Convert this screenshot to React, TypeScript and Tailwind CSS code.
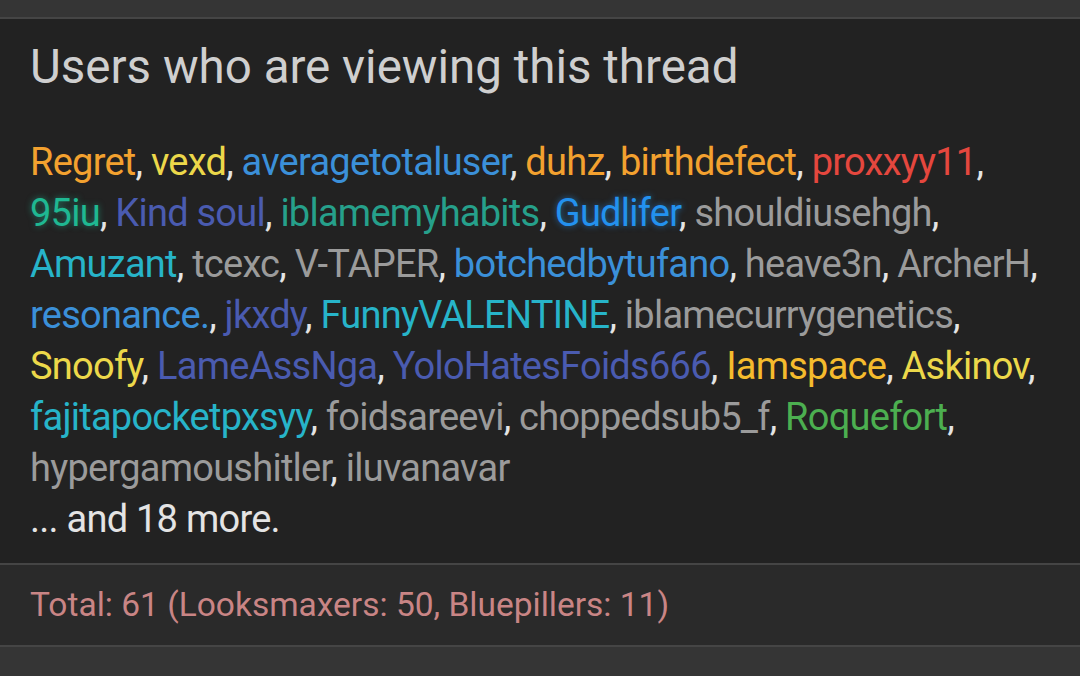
import React from "react";

type Viewer = { name: string; color: string; glow?: string };

const viewers: Viewer[] = [
  { name: "Regret", color: "text-[#f3a12f]" },
  { name: "vexd", color: "text-[#ecd84a]" },
  { name: "averagetotaluser", color: "text-[#3b90d9]" },
  { name: "duhz", color: "text-[#f3a12f]" },
  { name: "birthdefect", color: "text-[#f3a12f]" },
  { name: "proxxyy11", color: "text-[#e5473e]" },
  { name: "95iu", color: "text-[#1fb892]", glow: "[text-shadow:0_0_6px_rgba(31,184,146,0.6)]" },
  { name: "Kind soul", color: "text-[#4a5bb0]" },
  { name: "iblamemyhabits", color: "text-[#26a08b]" },
  { name: "Gudlifer", color: "text-[#2391ee]", glow: "[text-shadow:0_0_6px_rgba(35,145,238,0.65)]" },
  { name: "shouldiusehgh", color: "text-[#9b9b9b]" },
  { name: "Amuzant", color: "text-[#27b4c9]" },
  { name: "tcexc", color: "text-[#9b9b9b]" },
  { name: "V-TAPER", color: "text-[#9b9b9b]" },
  { name: "botchedbytufano", color: "text-[#3b90d9]" },
  { name: "heave3n", color: "text-[#9b9b9b]" },
  { name: "ArcherH", color: "text-[#9b9b9b]" },
  { name: "resonance.", color: "text-[#3b90d9]" },
  { name: "jkxdy", color: "text-[#4a5bb0]" },
  { name: "FunnyVALENTINE", color: "text-[#27b4c9]" },
  { name: "iblamecurrygenetics", color: "text-[#9b9b9b]" },
  { name: "Snoofy", color: "text-[#ecd84a]" },
  { name: "LameAssNga", color: "text-[#4a5bb0]" },
  { name: "YoloHatesFoids666", color: "text-[#4a5bb0]" },
  { name: "Iamspace", color: "text-[#f5bb2d]" },
  { name: "Askinov", color: "text-[#ecd84a]" },
  { name: "fajitapocketpxsyy", color: "text-[#27b4c9]" },
  { name: "foidsareevi", color: "text-[#9b9b9b]" },
  { name: "choppedsub5_f", color: "text-[#9b9b9b]" },
  { name: "Roquefort", color: "text-[#4caf50]" },
  { name: "hypergamoushitler", color: "text-[#9b9b9b]" },
  { name: "iluvanavar", color: "text-[#9b9b9b]" },
];

export default function App() {
  return (
    <div className="w-[1080px] h-[676px] overflow-hidden bg-[#353535] flex flex-col font-['Roboto',sans-serif]">
      <div className="h-[17px] shrink-0" />
      <section className="border-t-2 border-b-2 border-[#454545] bg-[#222222] flex flex-col">
        <h3 className="pl-[30px] pr-[16px] pt-[20px] pb-[42px] text-[47.5px] leading-[56px] text-[#cfcfcf] font-normal">
          Users who are viewing this thread
        </h3>
        <div className="pl-[30px] pr-[14px] pb-[18px] text-[38px] leading-[51px] tracking-[-0.75px] text-[#e4e4e4]">
          <ul className="flex flex-wrap">
            {viewers.map((v, i) => (
              <li key={v.name} className="whitespace-pre">
                <span className={`${v.color} ${v.glow ?? ""}`}>{v.name}</span>
                {i < viewers.length - 1 ? ", " : ""}
              </li>
            ))}
          </ul>
          <div>... and 18 more.</div>
        </div>
      </section>
      <footer className="h-[82px] shrink-0 bg-[#2a2a2a] border-b-2 border-[#454545] flex items-center px-[30px]">
        <span className="text-[33.5px] text-[#c98585] whitespace-nowrap">
          Total: 61 (Looksmaxers: 50, Bluepillers: 11)
        </span>
      </footer>
    </div>
  );
}
